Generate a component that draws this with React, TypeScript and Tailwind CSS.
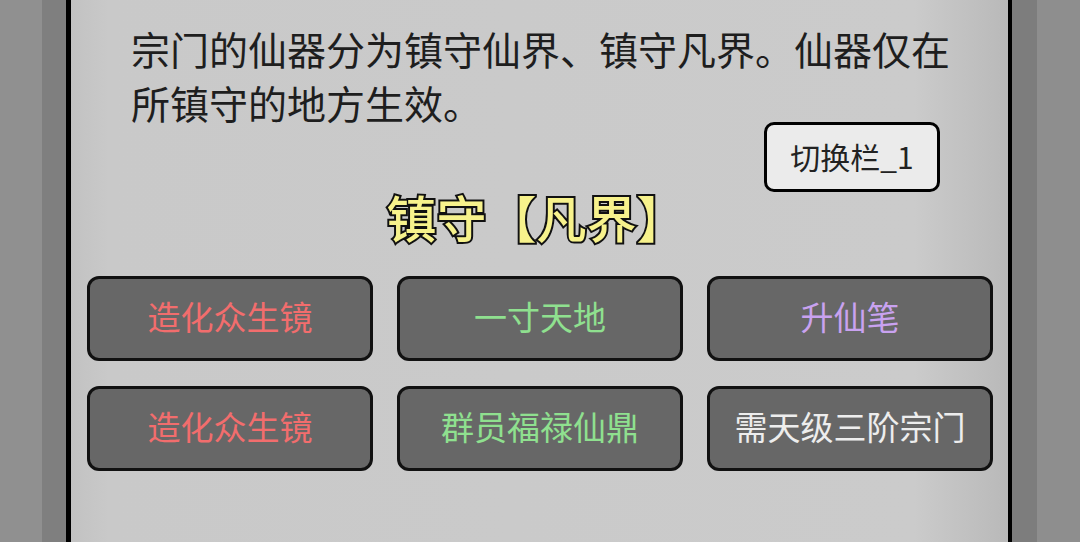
import React from 'react';

const cells = [
  { name: '造化众生镜', color: 'text-[#f26d6d]' },
  { name: '一寸天地', color: 'text-[#8fe08f]' },
  { name: '升仙笔', color: 'text-[#c9a2f0]' },
  { name: '造化众生镜', color: 'text-[#f26d6d]' },
  { name: '群员福禄仙鼎', color: 'text-[#8fe08f]' },
  { name: '需天级三阶宗门', color: 'text-[#ededed]' },
];

const App: React.FC = () => {
  return (
    <div className="flex w-[1080px] h-[542px] overflow-hidden font-['Noto_Sans_CJK_SC','Noto_Sans',sans-serif]">
      {/* left outer frame */}
      <div className="w-[42px] bg-[#909090]" />
      <div className="w-[24px] bg-[#7f7f7f]" />
      <div className="w-[5px] bg-black" />

      {/* main panel */}
      <div className="flex-1 flex flex-col bg-[linear-gradient(to_right,#c2c2c2,#c9c9c9_4%,#cbcbcb_90%,#b9b9b9)]">
        <p className="pl-[60px] pr-[40px] pt-[21px] text-[39px] leading-[54px] text-[#1e1e1e]">
          宗门的仙器分为镇守仙界、镇守凡界。仙器仅在所镇守的地方生效。
        </p>

        <div className="flex justify-end pr-[68px] -mt-[7px]">
          <button className="w-[176px] h-[70px] rounded-[10px] border-[3px] border-black bg-[#ebebeb] text-[30px] leading-none pb-[3px] text-[#222] font-['Noto_Sans_CJK_SC','Roboto',sans-serif]">
            切换栏_1
          </button>
        </div>

        <div className="flex justify-center pr-[6px] -mt-[4px]">
          <h2 className="text-[50px] leading-[56px] font-medium text-[#f7f28c] [-webkit-text-stroke:4px_#111] [paint-order:stroke_fill]">
            镇守【凡界】
          </h2>
        </div>

        <div className="grid grid-cols-3 gap-x-[24px] gap-y-[25px] pl-[16px] pr-[15px] mt-[32px]">
          {cells.map((c, i) => (
            <div
              key={i}
              className="h-[85px] rounded-[12px] border-[3px] border-[#111] bg-[#676767] flex items-center justify-center pb-[5px]"
            >
              <span className={`text-[33px] leading-none ${c.color}`}>{c.name}</span>
            </div>
          ))}
        </div>
      </div>

      {/* right outer frame */}
      <div className="w-[4px] bg-black" />
      <div className="w-[25px] bg-[#7d7d7d]" />
      <div className="w-[43px] bg-[#8e8e8e]" />
    </div>
  );
};

export default App;
